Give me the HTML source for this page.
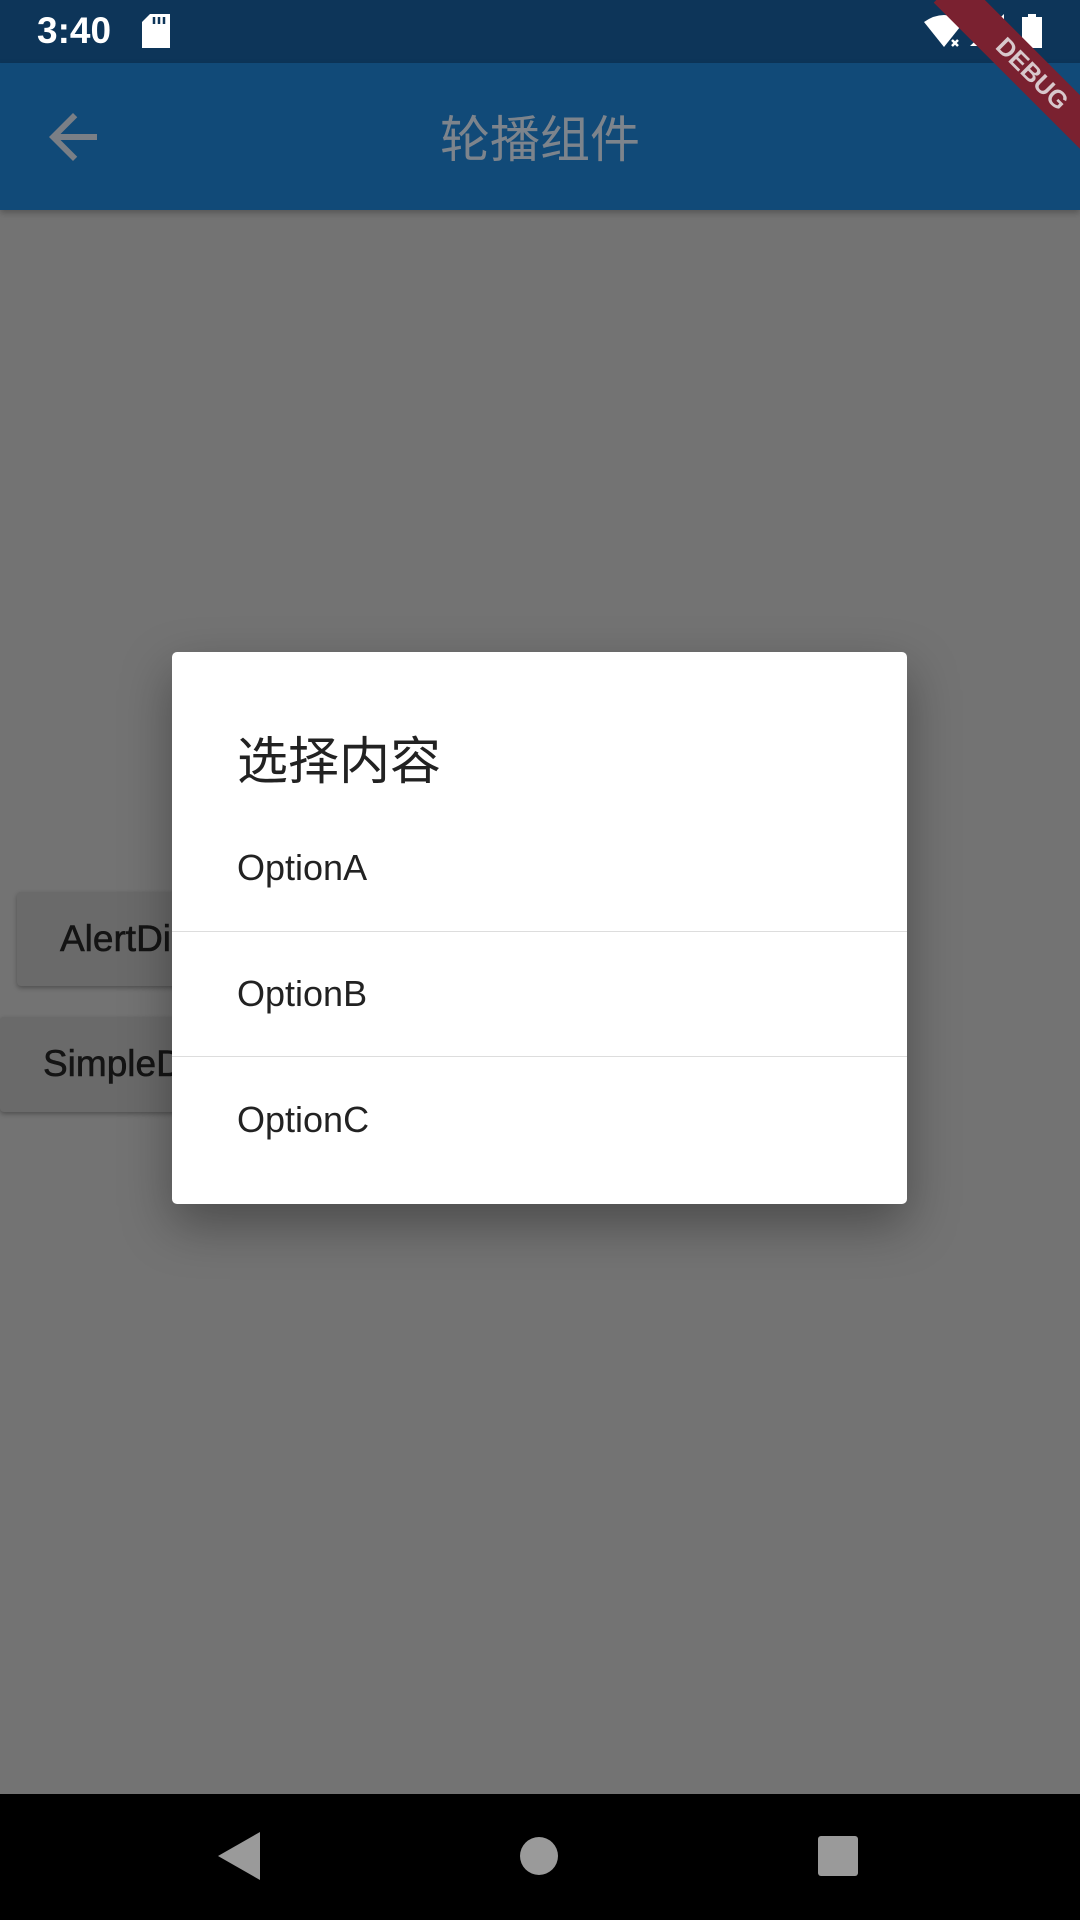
<!DOCTYPE html>
<html><head><meta charset="utf-8"><style>
*{margin:0;padding:0;box-sizing:border-box}
body{width:1080px;height:1920px;position:relative;overflow:hidden;background:#737373;font-family:"Liberation Sans","Noto Sans CJK SC",sans-serif}
.status{position:absolute;left:0;top:0;width:1080px;height:63px;background:#0d3559}
.appbar{position:absolute;left:0;top:63px;width:1080px;height:147px;background:#114a78;box-shadow:0 3px 6px rgba(0,0,0,.25)}
.nav{position:absolute;left:0;top:1794px;width:1080px;height:126px;background:#000}
.btn{position:absolute;background:#6a6a6a;border-radius:4px;box-shadow:0 2px 5px rgba(0,0,0,.3);color:#141414;font-size:37px;line-height:94px;white-space:nowrap;overflow:hidden;-webkit-text-stroke:0.6px #141414}
.dialog{position:absolute;left:172px;top:652px;width:735px;height:552px;background:#fff;border-radius:5px;box-shadow:0 20px 50px rgba(0,0,0,.35)}
.opt{position:absolute;left:65px;font-size:36px;color:#222}
.div{position:absolute;left:0;width:735px;height:1px;background:#ddd}
</style></head><body>
<div class="status">
 <div style="position:absolute;left:37px;top:10px;color:#fff;font-size:37px;font-weight:bold">3:40</div>
 <svg style="position:absolute;left:142px;top:14px" width="30" height="34"><path d="M8 0H28V34H0V8Z" fill="#fff"/><path d="M12 3v7M17 3v7M22 3v7" stroke="#0d3559" stroke-width="2.5"/></svg>
 <svg style="position:absolute;left:924px;top:14px" width="40" height="34"><path d="M0 8Q20 -6 40 8L20 33Z" fill="#fff"/><path d="M28 26l6 6M34 26l-6 6" stroke="#fff" stroke-width="2.5"/></svg>
 <svg style="position:absolute;left:970px;top:14px" width="36" height="34"><path d="M34 0V32H0Z" fill="#fff"/></svg>
 <svg style="position:absolute;left:1022px;top:14px" width="20" height="34"><path d="M6 0H14V3H20V34H0V3H6Z" fill="#fff"/></svg>
</div>
<div class="appbar">
 <svg style="position:absolute;left:49px;top:50px" width="48" height="48" viewBox="4 4 16 16"><path d="M20 11H7.83l5.59-5.59L12 4l-8 8 8 8 1.41-1.41L7.83 13H20z" fill="#7a7f86"/></svg>
 <div style="position:absolute;left:0;width:1080px;top:37px;text-align:center;color:#7d848c;font-size:50px">轮播组件</div>
</div>
<div style="position:absolute;left:912px;top:55px;width:240px;height:38px;background:#7a2130;transform:rotate(45deg);color:#d8c8cc;font-weight:bold;font-size:25px;text-align:center;line-height:38px;transform-origin:center">DEBUG</div>
<div class="btn" style="left:17px;top:892px;width:300px;height:94px;padding-left:43px">AlertDialog</div>
<div class="btn" style="left:0;top:1017px;width:300px;height:95px;padding-left:43px">SimpleDialog</div>
<div class="dialog">
 <div style="position:absolute;left:65px;top:70px;font-size:51px;color:#222;font-family:'Noto Sans CJK SC',sans-serif;line-height:70px">选择内容</div>
 <div class="opt" style="top:195px">OptionA</div>
 <div class="div" style="top:279px"></div>
 <div class="opt" style="top:321px">OptionB</div>
 <div class="div" style="top:404px"></div>
 <div class="opt" style="top:447px">OptionC</div>
</div>
<div class="nav">
 <svg style="position:absolute;left:218px;top:38px" width="42" height="48"><path d="M42 0V48L0 24Z" fill="#9a9a9a"/></svg>
 <div style="position:absolute;left:520px;top:43px;width:38px;height:38px;border-radius:50%;background:#9a9a9a"></div>
 <div style="position:absolute;left:818px;top:42px;width:40px;height:40px;border-radius:3px;background:#9a9a9a"></div>
</div>
</body></html>
